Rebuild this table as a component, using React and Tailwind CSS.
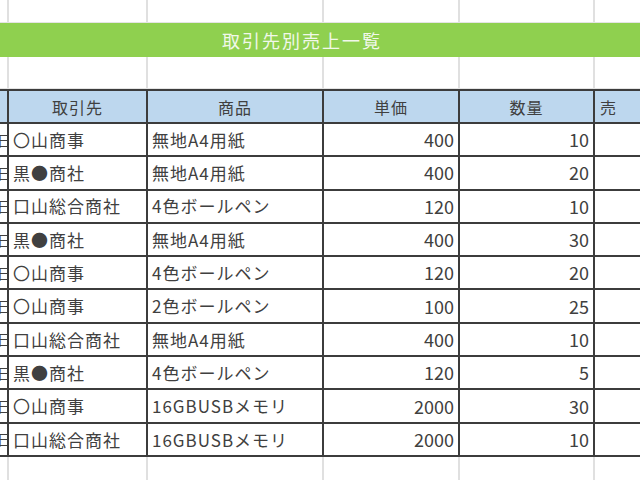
const rows = [
  ["〇山商事", "無地A4用紙", 400, 10],
  ["黒●商社", "無地A4用紙", 400, 20],
  ["口山総合商社", "4色ボールペン", 120, 10],
  ["黒●商社", "無地A4用紙", 400, 30],
  ["〇山商事", "4色ボールペン", 120, 20],
  ["〇山商事", "2色ボールペン", 100, 25],
  ["口山総合商社", "無地A4用紙", 400, 10],
  ["黒●商社", "4色ボールペン", 120, 5],
  ["〇山商事", "16GBUSBメモリ", 2000, 30],
  ["口山総合商社", "16GBUSBメモリ", 2000, 10],
];

const font = { fontFamily: '"Noto Sans CJK JP", "Noto Sans", sans-serif' };

function BlankRow({ h }) {
  return (
    <div className={`flex ${h} border-b border-[#e4e4e4]`}>
      <div className="w-[9px] border-r-2 border-[#e0e0e0]" />
      <div className="w-[139px] border-r-2 border-[#e0e0e0]" />
      <div className="w-[176px] border-r-2 border-[#e0e0e0]" />
      <div className="w-[136px] border-r-2 border-[#e0e0e0]" />
      <div className="w-[135px] border-r-2 border-[#e0e0e0]" />
      <div className="flex-1" />
    </div>
  );
}

export default function App() {
  return (
    <div className="w-[640px] h-[480px] overflow-hidden bg-white text-[#404040]" style={font}>
      <BlankRow h="h-[23px]" />
      <div className="h-[34px] bg-[#8fd04f] flex items-center justify-center text-[18px] tracking-[2px] text-[#f1f8ea] pr-[36px]">
        取引先別売上一覧
      </div>
      <BlankRow h="h-[32px]" />

      <div className="border-t-2 border-[#3c3c3c]">
        <div className="flex h-[33px] bg-[#bdd7ee] border-b-2 border-[#3c3c3c] text-[16px] tracking-[1px]">
          <div className="w-[9px] border-r-2 border-[#3c3c3c]" />
          <div className="w-[139px] border-r-2 border-[#3c3c3c] flex items-center justify-center">取引先</div>
          <div className="w-[176px] border-r-2 border-[#3c3c3c] flex items-center justify-center">商品</div>
          <div className="w-[136px] border-r-2 border-[#3c3c3c] flex items-center justify-center">単価</div>
          <div className="w-[135px] border-r-2 border-[#3c3c3c] flex items-center justify-center">数量</div>
          <div className="flex-1 flex items-center pl-[5px]">売</div>
        </div>

        {rows.map((r, i) => (
          <div key={i} className="flex h-[33.3px] border-b-2 border-[#3c3c3c] text-[17px]">
            <div className="w-[9px] border-r-2 border-[#3c3c3c] overflow-hidden flex items-center justify-end">
              <span className="text-[14px] leading-none -mr-[4px]">日</span>
            </div>
            <div className="w-[139px] border-r-2 border-[#3c3c3c] flex items-center pl-[4px] tracking-[1px]">{r[0]}</div>
            <div className="w-[176px] border-r-2 border-[#3c3c3c] flex items-center pl-[4px] tracking-[1px]">{r[1]}</div>
            <div className="w-[136px] border-r-2 border-[#3c3c3c] flex items-center justify-end pr-[4px] text-[18px]">{r[2]}</div>
            <div className="w-[135px] border-r-2 border-[#3c3c3c] flex items-center justify-end pr-[4px] text-[18px]">{r[3]}</div>
            <div className="flex-1" />
          </div>
        ))}
      </div>
      <BlankRow h="h-[40px]" />
    </div>
  );
}
